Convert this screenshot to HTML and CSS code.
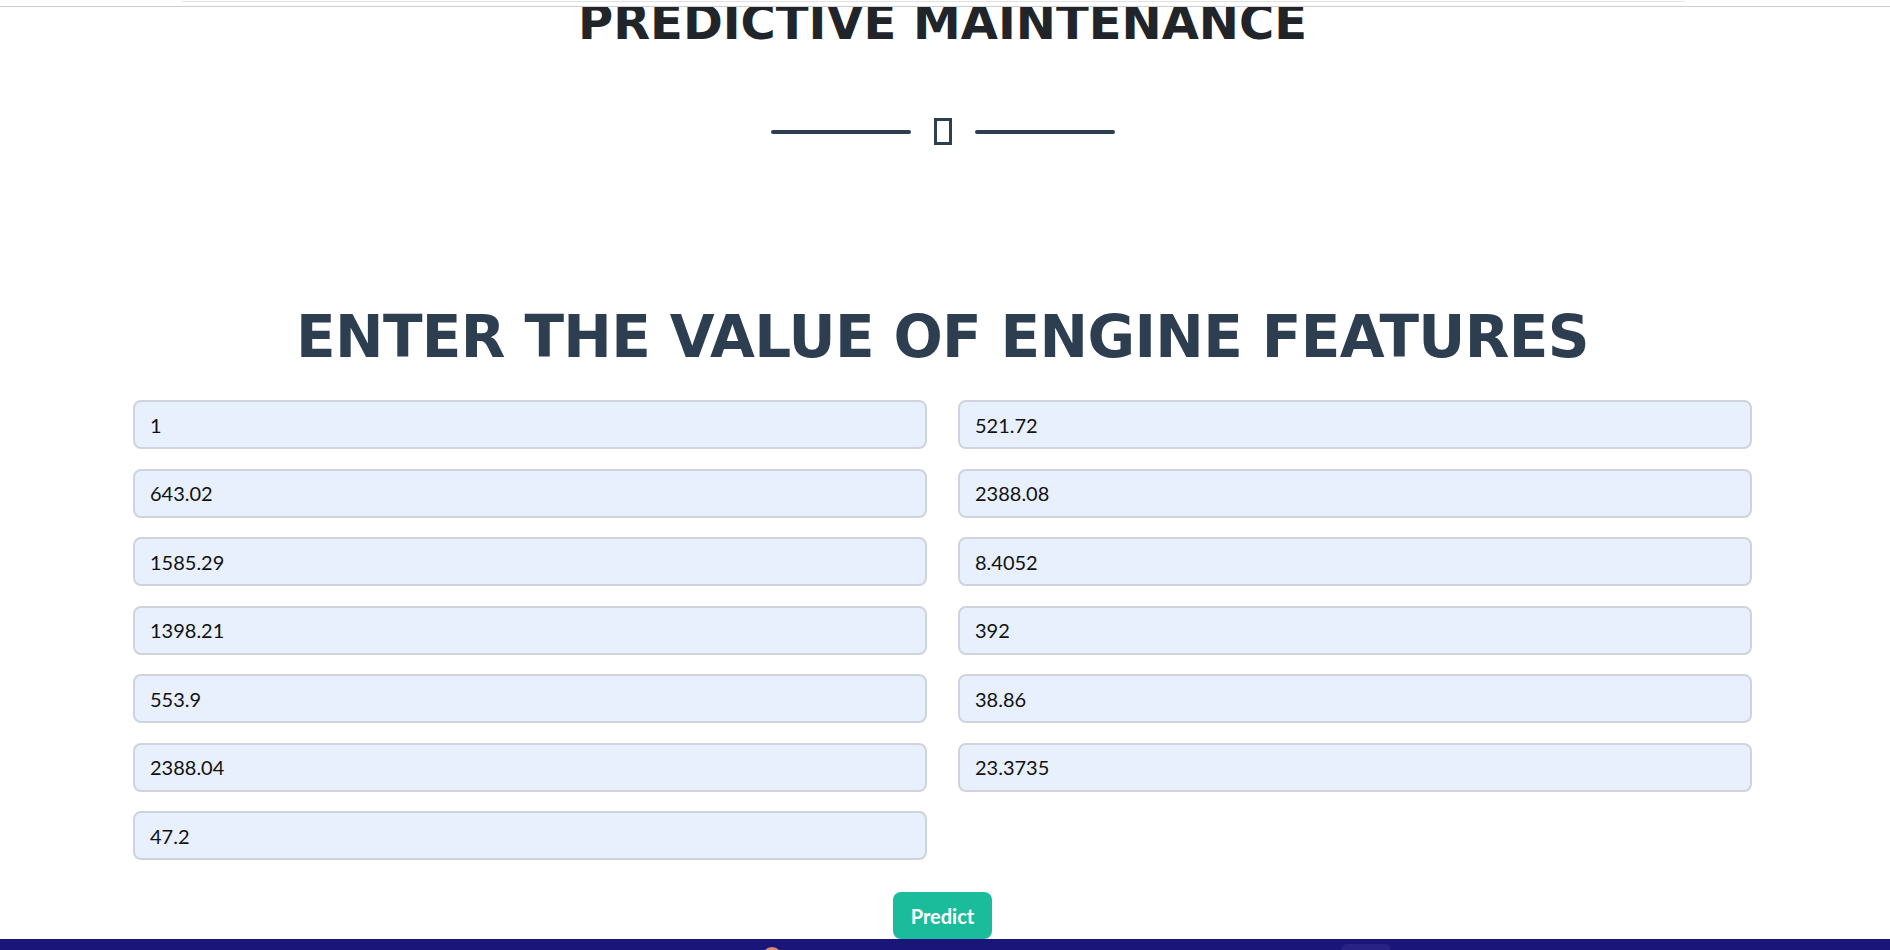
FILE: index.html
```html
<!DOCTYPE html>
<html lang="en">
<head>
<meta charset="utf-8">
<title>Predictive Maintenance</title>
<link rel="stylesheet" href="styles.css">
</head>
<body>
<div class="topbar"><div class="topbar-inner"></div></div>
<div class="page">
  <header class="masthead">
    <h1 class="masthead-heading">PREDICTIVE MAINTENANCE</h1>
    <div class="divider">
      <span class="divider-line"></span>
      <span class="divider-icon"></span>
      <span class="divider-line"></span>
    </div>
  </header>
  <section class="features">
    <h2 class="section-heading">ENTER THE VALUE OF ENGINE FEATURES</h2>
    <form class="feature-grid">
      <input class="field" type="text" value="1">
      <input class="field" type="text" value="521.72">
      <input class="field" type="text" value="643.02">
      <input class="field" type="text" value="2388.08">
      <input class="field" type="text" value="1585.29">
      <input class="field" type="text" value="8.4052">
      <input class="field" type="text" value="1398.21">
      <input class="field" type="text" value="392">
      <input class="field" type="text" value="553.9">
      <input class="field" type="text" value="38.86">
      <input class="field" type="text" value="2388.04">
      <input class="field" type="text" value="23.3735">
      <input class="field" type="text" value="47.2">
    </form>
    <div class="actions"><button class="btn-predict" type="button">Predict</button></div>
  </section>
</div>
<footer class="footer">
  <span class="footer-dot"></span>
  <span class="footer-chip"></span>
</footer>
</body>
</html>
```
FILE: styles.css
```css
* { box-sizing: border-box; }
html, body { margin: 0; padding: 0; background: #fff; }
body { font-family: "Lato", "Liberation Sans", sans-serif; color: #212529; }

.topbar {
  position: fixed;
  top: 0; left: 0; right: 0;
  height: 7px;
  border-bottom: 1px solid #cfcfcf;
  background: #fff;
  z-index: 10;
}
.topbar-inner {
  margin: 0 205px 0 181px;
  height: 2px;
  border-bottom: 1px solid #e2e2e2;
  border-radius: 0 0 2px 2px;
}

.page { width: 1885px; }

.masthead { display: flex; flex-direction: column; align-items: center; }
.masthead-heading {
  margin: 0;
  font-family: "DejaVu Sans", sans-serif;
  font-weight: 700;
  font-size: 48px;
  line-height: 44px;
  color: #212529;
}
.divider {
  margin-top: 74px;
  display: flex;
  align-items: center;
  height: 27px;
}
.divider-line {
  width: 140px;
  height: 4px;
  border-radius: 2px;
  background: #2c3e50;
}
.divider-icon {
  width: 18px;
  height: 27px;
  margin: 0 23px;
  border: 3px solid #2c3e50;
}

.features { display: flex; flex-direction: column; align-items: center; }
.section-heading {
  margin: 163px 0 0;
  font-family: "DejaVu Sans", sans-serif;
  font-weight: 700;
  font-size: 58px;
  line-height: 1;
  letter-spacing: -0.65px;
  color: #2c3e50;
}
.feature-grid {
  margin-top: 34px;
  width: 1619px;
  display: grid;
  grid-template-columns: 1fr 1fr;
  column-gap: 31px;
  row-gap: 19.5px;
}
.field {
  height: 49px;
  padding: 0 15px;
  font-family: "Lato", sans-serif;
  font-size: 20px;
  color: #111;
  background: #e8f0fe;
  border: 2px solid #cfd4dc;
  border-radius: 8px;
  outline: none;
}
.actions { margin-top: 32px; display: flex; justify-content: center; }
.btn-predict {
  height: 47px;
  padding: 0 18px;
  font-family: "Lato", sans-serif;
  font-weight: 700;
  font-size: 20px;
  color: #fff;
  background: #1abc9c;
  border: none;
  border-radius: 8px;
}

.footer {
  height: 80px;
  background: #1a1578;
  display: flex;
  align-items: flex-start;
}
.footer-dot {
  margin: 8px 0 0 762px;
  width: 20px; height: 20px;
  border-radius: 50%;
  background: #e0877c;
}
.footer-chip {
  margin: 5px 0 0 559px;
  width: 50px; height: 34px;
  border-radius: 6px;
  background: #272283;
}
```
